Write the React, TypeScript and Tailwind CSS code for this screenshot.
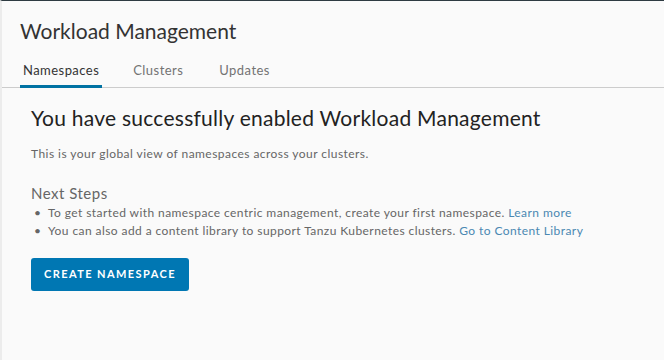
import React, { useState } from "react";

const tabs = ["Namespaces", "Clusters", "Updates"];

function App() {
  const [activeTab, setActiveTab] = useState<string>("Namespaces");

  return (
    <div
      className="w-[664px] h-[360px] bg-[#fafafa] border-t border-[#2e3b42] border-l-2 border-l-[#ececec] overflow-hidden text-[#565656]"
      style={{ fontFamily: "Lato, 'Open Sans', sans-serif" }}
    >
      <h1 className="pl-[18px] pt-[17px] text-[21px] leading-[26px] text-[#333333] font-normal">
        Workload Management
      </h1>

      <nav className="mt-[16px] flex border-b border-[#cccccc] pl-[18px]">
        {tabs.map((tab, i) => (
          <button
            key={tab}
            onClick={() => setActiveTab(tab)}
            className={`px-[3px] pt-[1px] pb-[6px] text-[13px] leading-[18px] tracking-[0.45px] -mb-px border-b-[3px] ${
              i === 0 ? "mr-[28px]" : "mr-[30px]"
            } ${
              activeTab === tab
                ? "border-[#0072a3] text-[#333333]"
                : "border-transparent text-[#737373]"
            }`}
          >
            {tab}
          </button>
        ))}
      </nav>

      <div className="pl-[29px] pt-[17px]">
        <h2 className="text-[21px] leading-[26px] tracking-[0.25px] text-[#222222] font-normal">
          You have successfully enabled Workload Management
        </h2>
        <p className="mt-[15px] text-[12px] leading-[16px] tracking-[0.45px] text-[#666666]">
          This is your global view of namespaces across your clusters.
        </p>

        <h3 className="mt-[21px] text-[15px] leading-[20px] tracking-[0.5px] text-[#666666] font-normal">
          Next Steps
        </h3>
        <ul className="mt-[1px] text-[12px] leading-[18px] tracking-[0.42px] text-[#666666]">
          <li className="flex items-center">
            <span className="w-[17px] pl-[3px]">•</span>
            <span>
              To get started with namespace centric management, create your
              first namespace.{" "}
              <a className="text-[#4a88b2]">Learn more</a>
            </span>
          </li>
          <li className="flex items-center">
            <span className="w-[17px] pl-[3px]">•</span>
            <span>
              You can also add a content library to support Tanzu Kubernetes
              clusters. <a className="text-[#4a88b2]">Go to Content Library</a>
            </span>
          </li>
        </ul>

        <button className="mt-[18px] h-[33px] w-[158px] rounded-[3px] bg-[#0077b3] text-[11px] font-bold tracking-[0.13em] text-white">
          CREATE NAMESPACE
        </button>
      </div>
    </div>
  );
}

export default App;
